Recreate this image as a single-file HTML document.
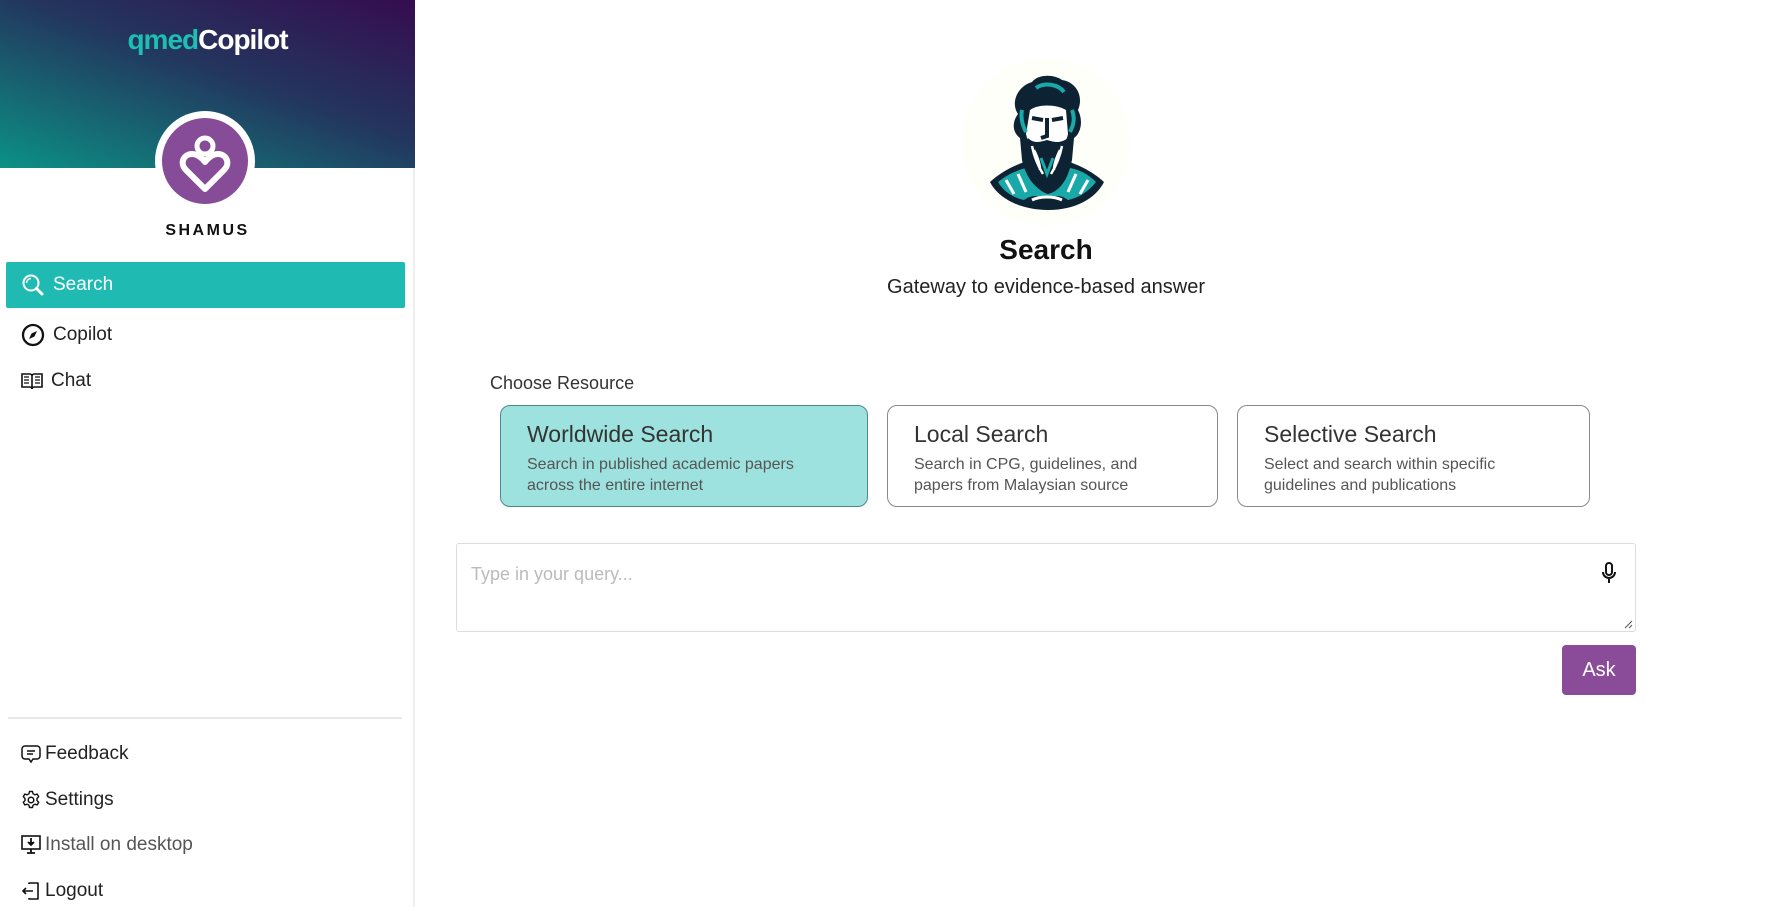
<!DOCTYPE html>
<html><head><meta charset="utf-8"><style>
*{margin:0;padding:0;box-sizing:border-box}
body{width:1780px;height:907px;background:#fff;font-family:"Liberation Sans",sans-serif;position:relative;overflow:hidden;color:#222}
.side{position:absolute;left:0;top:0;width:415px;height:907px;border-right:2px solid #eee;background:#fff}
.hdr{position:absolute;left:0;top:0;width:415px;height:168px;background:linear-gradient(200deg,#360c50 0%,#23365e 45%,#12787a 85%,#0b9186 100%)}
.logo{position:absolute;top:24px;left:0;width:415px;text-align:center;font-size:28px;font-weight:bold;letter-spacing:-1px}
.av{position:absolute;left:155px;top:111px;width:100px;height:100px;border-radius:50%;background:#fff}
.av .in{position:absolute;left:7px;top:7px;width:86px;height:86px;border-radius:50%;background:#864c98}
.name{position:absolute;top:222px;left:0;width:415px;text-align:center;font-weight:bold;font-size:16px;letter-spacing:2.5px;color:#111}
.nav{position:absolute;left:6px;width:399px;height:46px;font-size:19px;display:flex;align-items:center;padding-left:15px;color:#222}
.nav svg{margin-right:8px}
.active{background:#1fbbb3;color:#fff;border-radius:2px}
.div{position:absolute;left:8px;top:717px;width:394px;height:2px;background:#e8e8e8}
.b{position:absolute;left:21px;font-size:19px;display:flex;align-items:center;color:#222}
.b svg{margin-right:4px}
.card{position:absolute;top:405px;height:102px;border:1px solid #8a8a8a;border-radius:10px;padding:15px 0 0 26px;background:#fff}
.card h3{font-size:23px;font-weight:500;color:#333;margin-bottom:6px}
.card p{font-size:16px;color:#555;line-height:21px}
</style></head><body>
<div class="side">
<div class="hdr"></div>
<div class="logo"><span style="color:#1dbfb1">qmed</span><span style="color:#fff">Copilot</span></div>
<div class="av"><div class="in">
<svg width="86" height="86" viewBox="0 0 86 86"><circle cx="43" cy="28" r="8" fill="none" stroke="#fff" stroke-width="5"/><path d="M43 71 L24 52 C17 45 22 36 30 36 C36 36 40 40 43 44 C46 40 50 36 56 36 C64 36 69 45 62 52 Z" fill="none" stroke="#fff" stroke-width="6" stroke-linejoin="round"/></svg>
</div></div>
<div class="name">SHAMUS</div>
<div class="nav active" style="top:262px"><svg width="24" height="24" viewBox="0 0 24 24"><circle cx="10" cy="10" r="7.5" fill="none" stroke="#fff" stroke-width="2"/><path d="M5.5 10a4.5 4.5 0 0 1 4.5-4.5" fill="none" stroke="#fff" stroke-width="1.5"/><path d="M15.5 15.5L21 21" stroke="#fff" stroke-width="3" stroke-linecap="round"/></svg>Search</div>
<div class="nav" style="top:312px"><svg width="24" height="24" viewBox="0 0 24 24"><circle cx="12" cy="12" r="10" fill="none" stroke="#111" stroke-width="2.3"/><path d="M16 8L13.5 13.5 8 16 10.5 10.5Z" fill="#111"/></svg>Copilot</div>
<div class="nav" style="top:358px"><svg width="22" height="20" viewBox="0 0 22 20"><path d="M1 3h8c1 0 2 1 2 2v13c0-1-1-2-2-2H1ZM21 3h-8c-1 0-2 1-2 2v13c0-1 1-2 2-2h8Z" fill="none" stroke="#111" stroke-width="1.6"/><path d="M3 6h5M3 9h5M3 12h5M14 6h5M14 9h5M14 12h5" stroke="#111" stroke-width="1.2"/></svg>Chat</div>
<div class="div"></div>
<div class="b" style="top:743px"><svg width="20" height="20" viewBox="0 0 20 20"><path d="M4 2h12a3 3 0 0 1 3 3v7a3 3 0 0 1-3 3h-4l-2 3-2-3H4a3 3 0 0 1-3-3V5a3 3 0 0 1 3-3z" fill="none" stroke="#111" stroke-width="1.5"/><path d="M6 7h8M6 10h6" stroke="#111" stroke-width="1.5"/></svg>Feedback</div>
<div class="b" style="top:789px"><svg width="20" height="20" viewBox="0 0 20 20"><path d="M8.5 1.5h3l.6 2.3 1.8 1 2.3-.7 1.5 2.6-1.7 1.7v2.2l1.7 1.7-1.5 2.6-2.3-.7-1.8 1-.6 2.3h-3l-.6-2.3-1.8-1-2.3.7-1.5-2.6 1.7-1.7V8.4L2.3 6.7l1.5-2.6 2.3.7 1.8-1z" fill="none" stroke="#111" stroke-width="1.4" stroke-linejoin="round"/><circle cx="10" cy="10" r="2.8" fill="none" stroke="#111" stroke-width="1.5"/></svg>Settings</div>
<div class="b" style="top:834px;color:#555"><svg width="20" height="20" viewBox="0 0 20 20"><rect x="1" y="1" width="18" height="13" fill="none" stroke="#111" stroke-width="1.6"/><path d="M10 3v7M7 7l3 3 3-3M6 18h8M10 14v4" stroke="#111" stroke-width="1.8"/></svg>Install on desktop</div>
<div class="b" style="top:880px"><svg width="20" height="20" viewBox="0 0 20 20"><path d="M8 3V2h9v16H8v-1" fill="none" stroke="#111" stroke-width="1.6" stroke-linejoin="round"/><path d="M12 10H2M5 7l-3 3 3 3" fill="none" stroke="#111" stroke-width="1.6"/></svg>Logout</div>
</div>

<div style="position:absolute;left:962px;top:58px;width:168px;height:168px;border-radius:50%;background:#fffff9"></div>
<svg style="position:absolute;left:988px;top:74px" width="118" height="138" viewBox="0 0 118 138">
<path d="M2 108 C15 96 30 90 42 86 L76 86 C88 90 103 96 116 108 C108 124 88 136 60 136 C32 136 10 124 2 108Z" fill="#0d2333"/>
<path d="M10 108 C20 100 30 96 38 94 C42 108 52 118 60 120 C70 118 78 108 82 94 C92 96 100 100 108 108 C100 118 90 124 80 126 C72 120 66 122 60 124 C52 122 44 120 36 126 C26 124 16 118 10 108Z" fill="#1aa9a9"/>
<path d="M18 106l8 14M30 100l8 18M88 100l-8 18M100 106l-8 14M44 126c8-4 22-4 30 0" stroke="#fff" stroke-width="3" fill="none"/>
<path d="M30 40 C22 28 30 12 44 8 C50 0 66 0 74 6 C88 8 96 22 90 36 C96 48 92 60 86 64 L84 86 C80 104 70 116 59 118 C48 116 38 104 34 86 L32 64 C24 58 24 48 30 40Z" fill="#0d2333"/>
<path d="M42 36 C50 30 68 30 78 36 L80 60 C78 70 72 76 66 78 L52 78 C46 76 40 70 38 60Z" fill="#fff"/>
<path d="M44 44 L55 46 M64 46 L75 44 M59 44 L59 62 L53 64" stroke="#0d2333" stroke-width="4" fill="none"/>
<path d="M40 64 C46 70 52 68 59 66 C66 68 72 70 80 64 L84 80 C80 98 70 110 59 112 C48 110 38 98 36 80Z" fill="#0d2333"/>
<path d="M44 72 C46 82 50 92 55 100 M74 72 C72 82 68 92 63 100 M46 76 C50 84 52 90 52 96 M72 76 C68 84 66 90 66 96" stroke="#fff" stroke-width="2.5" fill="none"/>
<path d="M53 84 L59 100 L65 84" stroke="#1aa9a9" stroke-width="3" fill="none"/>
<path d="M48 14 C56 8 70 10 76 18 M34 36 C32 46 36 54 38 58 M84 36 C88 46 84 54 82 58" stroke="#1aa9a9" stroke-width="4" fill="none"/>
</svg>
<div style="position:absolute;left:456px;width:1180px;top:234px;text-align:center;font-size:28px;font-weight:bold;color:#111">Search</div>
<div style="position:absolute;left:456px;width:1180px;top:276px;text-align:center;font-size:20px;color:#222">Gateway to evidence-based answer</div>
<div style="position:absolute;left:490px;top:373px;font-size:18px;color:#333">Choose Resource</div>
<div class="card" style="left:500px;width:368px;background:#9de2de;border-color:#4a8a88"><h3>Worldwide Search</h3><p>Search in published academic papers<br>across the entire internet</p></div>
<div class="card" style="left:887px;width:331px"><h3>Local Search</h3><p>Search in CPG, guidelines, and<br>papers from Malaysian source</p></div>
<div class="card" style="left:1237px;width:353px"><h3>Selective Search</h3><p>Select and search within specific<br>guidelines and publications</p></div>
<div style="position:absolute;left:456px;top:543px;width:1180px;height:89px;border:1px solid #ddd;border-radius:3px">
<div style="position:absolute;left:14px;top:20px;font-size:18px;color:#bbb">Type in your query...</div>
<svg style="position:absolute;right:18px;top:18px" width="16" height="24" viewBox="0 0 16 24"><rect x="5" y="1" width="6" height="12" rx="3" fill="none" stroke="#111" stroke-width="2"/><path d="M2 10a6 6 0 0 0 12 0M8 16v5" fill="none" stroke="#111" stroke-width="2"/></svg>
<svg style="position:absolute;right:2px;bottom:2px" width="10" height="10"><path d="M9 2L2 9M9 6L6 9" stroke="#555" stroke-width="1"/></svg>
</div>
<div style="position:absolute;left:1562px;top:645px;width:74px;height:50px;background:#8a4c99;border-radius:4px;color:#fff;font-size:20px;display:flex;align-items:center;justify-content:center">Ask</div>
</body></html>
